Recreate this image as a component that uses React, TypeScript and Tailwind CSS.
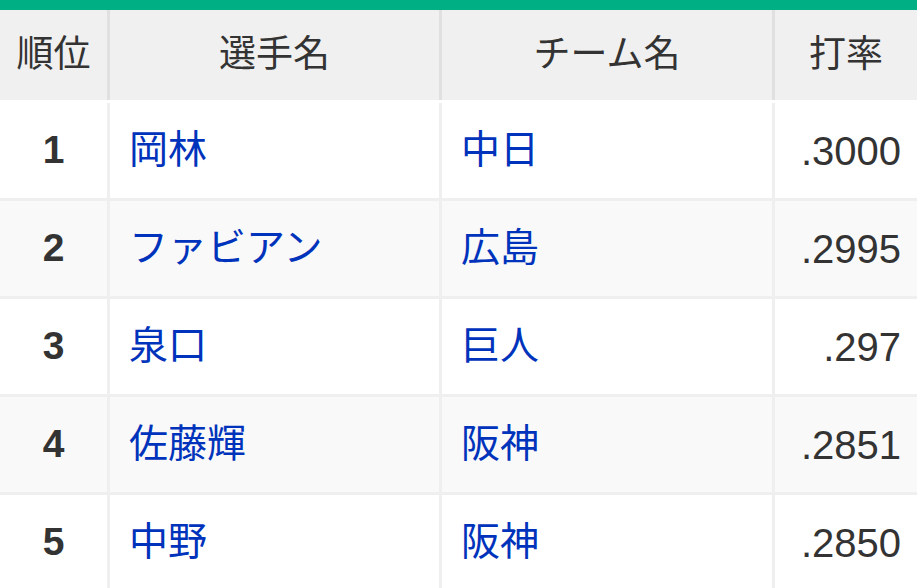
import React from "react";

const rows = [
  { rank: "1", name: "岡林", team: "中日", avg: ".3000" },
  { rank: "2", name: "ファビアン", team: "広島", avg: ".2995" },
  { rank: "3", name: "泉口", team: "巨人", avg: ".297" },
  { rank: "4", name: "佐藤輝", team: "阪神", avg: ".2851" },
  { rank: "5", name: "中野", team: "阪神", avg: ".2850" },
];

export default function App() {
  return (
    <div
      className="w-[917px] h-[588px] overflow-hidden bg-white text-[#333] text-[39px]"
      style={{ fontFamily: '"Liberation Sans", "Noto Sans CJK JP", sans-serif' }}
    >
      <div className="h-[10px] bg-[#00b084]" />
      <div className="grid grid-cols-[110px_332px_333px_142px] h-[93px] bg-[#f0f0f0] border-b-[3px] border-white text-[37px]">
        <div className="flex items-center justify-center border-r-[3px] border-[#e0e0e0]">順位</div>
        <div className="flex items-center justify-center border-r-[3px] border-[#e0e0e0]">選手名</div>
        <div className="flex items-center justify-center border-r-[3px] border-[#e0e0e0]">チーム名</div>
        <div className="flex items-center justify-center">打率</div>
      </div>
      {rows.map((r, i) => (
        <div
          key={r.rank}
          className={
            "grid grid-cols-[110px_332px_333px_142px] h-[98px] border-b-[3px] border-[#efefef] " +
            (i % 2 === 1 ? "bg-[#f9f9f9]" : "bg-white")
          }
        >
          <div className="flex items-center justify-center font-bold text-[39px] border-r-[3px] border-[#efefef]">{r.rank}</div>
          <div className="flex items-center pl-[19px] text-[#0033bb] border-r-[3px] border-[#efefef]">{r.name}</div>
          <div className="flex items-center pl-[19px] text-[#0033bb] border-r-[3px] border-[#efefef]">{r.team}</div>
          <div className="flex items-center justify-end pr-[16px] text-[40px]">{r.avg}</div>
        </div>
      ))}
    </div>
  );
}
